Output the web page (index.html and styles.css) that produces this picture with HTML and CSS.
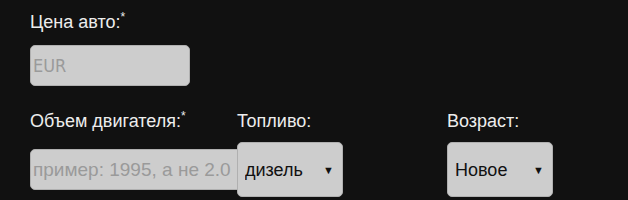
FILE: index.html
```html
<!DOCTYPE html>
<html lang="ru">

<head>
    <meta charset="UTF-8">
    <meta name="viewport" content="width=device-width, initial-scale=1.0">
    <title>Расчёт растаможки</title>
    <link rel="stylesheet" href="styles.css">
</head>

<body>
    <form class="calc">
        <div class="field price">
            <label for="price">Цена авто:<sup>*</sup></label>
            <input type="text" id="price" placeholder="EUR">
        </div>

        <div class="row">
            <div class="field">
                <label for="volume">Объем двигателя:<sup>*</sup></label>
                <div class="control">
                    <input type="text" id="volume" class="wide" placeholder="пример: 1995, а не 2.0">
                </div>
            </div>
            <div class="field">
                <label for="fuel">Топливо:</label>
                <div class="control">
                    <div class="select-wrap">
                        <select id="fuel">
                            <option>дизель</option>
                            <option>бензин</option>
                        </select>
                        <span class="arrow">&#9660;</span>
                    </div>
                </div>
            </div>
            <div class="field">
                <label for="age">Возраст:</label>
                <div class="control">
                    <div class="select-wrap">
                        <select id="age">
                            <option>Новое</option>
                            <option>1-3 года</option>
                            <option>3-5 лет</option>
                        </select>
                        <span class="arrow">&#9660;</span>
                    </div>
                </div>
            </div>
        </div>
    </form>
</body>

</html>
```

FILE: styles.css
```css
/* General styling */
body {
    font-family: "Liberation Sans", Arial, sans-serif;
    background: #111;
    color: #ededed;
    margin: 0;
    padding: 0;
}

.calc {
    padding: 11px 30px 0;
}

label {
    display: block;
    font-size: 18px;
    line-height: 22px;
}

label sup {
    font-size: 12px;
    vertical-align: 7px;
    line-height: 0;
}

input,
select {
    font-family: "Liberation Sans", Arial, sans-serif;
    font-size: 18px;
    color: #222;
    background: #cdcdcd;
    border: 1px solid #b0b0b0;
    border-radius: 5px;
    outline: none;
    box-sizing: border-box;
}

input::placeholder {
    color: #9a9a9a;
}

.price input {
    width: 160px;
    height: 41px;
    margin-top: 12px;
    padding: 0 2px;
    font-family: "Liberation Sans Narrow", "DejaVu Sans Condensed", "Liberation Sans", sans-serif;
}

.row {
    display: grid;
    grid-template-columns: 207px 210px auto;
    margin-top: 24px;
}

.control {
    height: 55px;
    margin-top: 10px;
    display: flex;
    align-items: center;
}

.wide {
    width: 212px;
    height: 41px;
    padding: 0 2px;
    font-size: 19px;
}

.select-wrap {
    position: relative;
}

select {
    appearance: none;
    -webkit-appearance: none;
    width: 106px;
    height: 55px;
    padding: 0 0 0 7px;
    color: #111;
}

.arrow {
    position: absolute;
    right: 9px;
    top: 50%;
    transform: translateY(-50%);
    font-size: 11px;
    color: #111;
    pointer-events: none;
}
```
